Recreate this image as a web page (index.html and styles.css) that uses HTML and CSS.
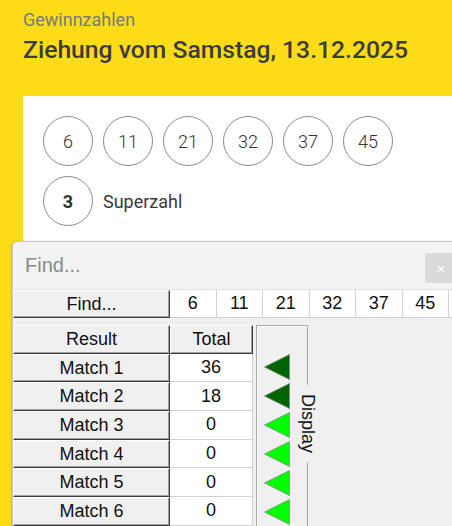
FILE: index.html
```html
<!DOCTYPE html>
<html lang="de">
<head>
<meta charset="utf-8">
<title>Gewinnzahlen</title>
<link rel="stylesheet" href="styles.css">
</head>
<body>
<header class="head">
  <div class="kicker">Gewinnzahlen</div>
  <h1 class="title">Ziehung vom Samstag, 13.12.2025</h1>
</header>
<section class="panel">
  <div class="balls">
    <span class="ball">6</span>
    <span class="ball">11</span>
    <span class="ball">21</span>
    <span class="ball">32</span>
    <span class="ball">37</span>
    <span class="ball">45</span>
  </div>
  <div class="super">
    <span class="ball ball-bold">3</span>
    <span class="super-label">Superzahl</span>
  </div>
</section>

<div class="window">
  <div class="titlebar">
    <span class="wtitle">Find...</span>
    <span class="close">&#215;</span>
  </div>
  <div class="toprow">
    <div class="btn find">Find...</div>
    <div class="num">6</div>
    <div class="num">11</div>
    <div class="num">21</div>
    <div class="num">32</div>
    <div class="num">37</div>
    <div class="num">45</div>
    <div class="num"></div>
  </div>
  <div class="main">
    <div class="table">
      <div class="btn">Result</div>
      <div class="btn">Total</div>
      <div class="btn">Match 1</div>
      <div class="val">36</div>
      <div class="btn">Match 2</div>
      <div class="val">18</div>
      <div class="btn">Match 3</div>
      <div class="val">0</div>
      <div class="btn">Match 4</div>
      <div class="val">0</div>
      <div class="btn">Match 5</div>
      <div class="val">0</div>
      <div class="btn">Match 6</div>
      <div class="val">0</div>
    </div>
    <div class="display">
      <svg class="tri" width="26" height="26" viewBox="0 0 26 26"><polygon points="0.5,13 25.5,0.5 25.5,25.5" fill="#006400" stroke="#7a8a7a"/></svg>
      <svg class="tri" width="26" height="26" viewBox="0 0 26 26"><polygon points="0.5,13 25.5,0.5 25.5,25.5" fill="#006400" stroke="#7a8a7a"/></svg>
      <svg class="tri" width="26" height="26" viewBox="0 0 26 26"><polygon points="0.5,13 25.5,0.5 25.5,25.5" fill="#00ff00" stroke="#8a9a8a"/></svg>
      <svg class="tri" width="26" height="26" viewBox="0 0 26 26"><polygon points="0.5,13 25.5,0.5 25.5,25.5" fill="#00ff00" stroke="#8a9a8a"/></svg>
      <svg class="tri" width="26" height="26" viewBox="0 0 26 26"><polygon points="0.5,13 25.5,0.5 25.5,25.5" fill="#00ff00" stroke="#8a9a8a"/></svg>
      <svg class="tri" width="26" height="26" viewBox="0 0 26 26"><polygon points="0.5,13 25.5,0.5 25.5,25.5" fill="#00ff00" stroke="#8a9a8a"/></svg>
      <span class="legend">Display</span>
    </div>
  </div>
</div>
</body>
</html>
```

FILE: styles.css
```css
html, body {
  margin: 0;
  padding: 0;
}

body {
  background: #fcdc17;
  width: 452px;
  height: 526px;
  overflow: hidden;
  position: relative;
  font-family: Roboto, "Noto Sans", sans-serif;
}

.head {
  padding: 9px 23px 0;
}

.kicker {
  font-size: 18px;
  line-height: 21px;
  color: #7a7a7a;
}

.title {
  margin: 5px 0 0;
  font-size: 24.7px;
  line-height: 30px;
  font-weight: 500;
  color: #3c3c3c;
}

.panel {
  margin: 31px 0 0 23px;
  background: #fff;
  padding: 20px 0 0 20px;
  height: 420px;
}

.balls {
  display: flex;
  gap: 10px;
}

.ball {
  width: 50px;
  height: 50px;
  box-sizing: border-box;
  border: 1px solid #8c8c8c;
  border-radius: 50%;
  display: flex;
  align-items: center;
  justify-content: center;
  font-size: 18px;
  font-weight: 300;
  color: #333;
}

.super {
  display: flex;
  align-items: center;
  gap: 10px;
  margin-top: 10px;
}

.ball-bold {
  font-weight: 700;
}

.super-label {
  font-size: 18px;
  color: #3a3a3a;
}

/* Overlaid dialog window */
.window {
  position: absolute;
  left: 12px;
  top: 241px;
  width: 460px;
  height: 300px;
  background: #f0f0f0;
  border: 1px solid #c6c6c6;
  border-radius: 5px 0 0 0;
  font-family: "Liberation Sans", Arial, sans-serif;
  box-shadow: -1px 0 2px rgba(0, 0, 0, 0.12);
}

.titlebar {
  height: 47px;
  display: flex;
  align-items: center;
  padding-left: 12px;
  background: #f3f3f3;
  border-bottom: 1px solid #e0e0e0;
  border-radius: 5px 0 0 0;
}

.wtitle {
  font-size: 20px;
  line-height: 23px;
  color: #8a8a8a;
}

.close {
  margin-left: auto;
  margin-right: 16px;
  align-self: flex-start;
  margin-top: 11px;
  width: 32px;
  height: 30px;
  background: #dadada;
  color: #fff;
  display: flex;
  align-items: center;
  justify-content: center;
  font-size: 15px;
}

.toprow {
  display: flex;
  height: 28px;
  margin-bottom: 7px;
}

.btn {
  box-sizing: border-box;
  background: #f0f0f0;
  border: 1px solid;
  border-color: #ffffff #3c3c3c #3c3c3c #ffffff;
  box-shadow: inset -1px -1px #a0a0a0;
  display: flex;
  align-items: center;
  justify-content: center;
  font-size: 18px;
  color: #111;
}

.find {
  width: 157px;
  flex: none;
}

.num {
  flex: none;
  width: 46.5px;
  box-sizing: border-box;
  background: #fff;
  border-right: 1px solid #d2d2d2;
  border-bottom: 1px solid #d2d2d2;
  display: flex;
  align-items: center;
  justify-content: center;
  font-size: 18px;
  color: #111;
}

.main {
  display: flex;
  align-items: flex-start;
}

.table {
  display: grid;
  grid-template-columns: 157px 83px;
  grid-auto-rows: 28.7px;
}

.val {
  box-sizing: border-box;
  background: #fff;
  border-right: 1px solid #d2d2d2;
  border-bottom: 1px solid #d2d2d2;
  display: flex;
  align-items: center;
  justify-content: center;
  font-size: 18px;
  color: #111;
}

.display {
  position: relative;
  margin-left: 3px;
  width: 52px;
  height: 220px;
  box-sizing: border-box;
  border: 1px solid #a8a8a8;
  box-shadow: inset 1px 1px #ffffff;
  padding: 28px 0 0 7px;
}

.tri {
  display: block;
  margin-bottom: 3px;
}

.legend {
  position: absolute;
  top: 59px;
  right: -11px;
  writing-mode: vertical-rl;
  font-size: 18px;
  line-height: 20px;
  padding: 9px 0;
  background: #f0f0f0;
  color: #111;
}
```
